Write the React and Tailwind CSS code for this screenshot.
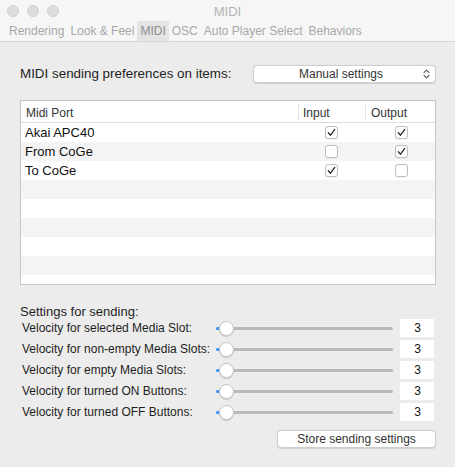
import { useState } from "react";

const tabs = ["Rendering", "Look & Feel", "MIDI", "OSC", "Auto Player Select", "Behaviors"];

const ports = [
  { name: "Akai APC40", input: true, output: true },
  { name: "From CoGe", input: false, output: true },
  { name: "To CoGe", input: true, output: false },
];

const velocities = [
  "Velocity for selected Media Slot:",
  "Velocity for non-empty Media Slots:",
  "Velocity for empty Media Slots:",
  "Velocity for turned ON Buttons:",
  "Velocity for turned OFF Buttons:",
];

function Check({ checked }) {
  return (
    <div className="w-[13px] h-[13px] rounded-[3px] border border-[#bdbdbd] bg-white flex items-center justify-center shadow-[0_0.5px_0.5px_rgba(0,0,0,0.08)]">
      {checked && (
        <svg width="9" height="9" viewBox="0 0 9 9">
          <path d="M1.3 4.8 L3.5 7.2 L7.8 1.4" fill="none" stroke="#2a2a2a" strokeWidth="1.3" strokeLinecap="round" strokeLinejoin="round" />
        </svg>
      )}
    </div>
  );
}

function Slider() {
  return (
    <div className="relative w-[177px] h-[18px] flex items-center">
      <div className="absolute left-0 right-0 h-[3px] rounded-full bg-[#b9b9b9]" />
      <div className="absolute left-0 w-[10px] h-[3px] rounded-l-full bg-[#3b99fc]" />
      <div className="absolute left-[3px] w-[15px] h-[15px] rounded-full bg-white border border-[#c4c4c4] shadow-[0_1px_1px_rgba(0,0,0,0.15)]" />
    </div>
  );
}

export default function App() {
  const [mode] = useState("Manual settings");
  const empty = [0, 1, 2, 3, 4, 5];

  return (
    <div className="w-[455px] h-[467px] bg-[#ececec] flex flex-col overflow-hidden" style={{ fontFamily: '"Liberation Sans", Arial, sans-serif' }}>
      {/* title bar + tabs */}
      <div className="bg-[#f6f6f6] border-b border-[#d6d6d6]">
        <div className="relative h-[21px] flex items-center justify-center">
          <div className="absolute left-[7px] top-[5px] flex gap-[8px]">
            <div className="w-[12px] h-[12px] rounded-full bg-[#dcdcdc] border border-[#d0d0d0]" />
            <div className="w-[12px] h-[12px] rounded-full bg-[#dcdcdc] border border-[#d0d0d0]" />
            <div className="w-[12px] h-[12px] rounded-full bg-[#dcdcdc] border border-[#d0d0d0]" />
          </div>
          <span className="text-[13px] text-[#b3b3b3] mt-[2px]">MIDI</span>
        </div>
        <div className="flex h-[20px] pl-[6px] items-stretch">
          {tabs.map((t) => (
            <div
              key={t}
              className={
                "px-[3px] flex items-center text-[12px] " +
                (t === "MIDI" ? "bg-[#e4e4e4] text-[#8e8e8e]" : "text-[#a8a8a8]")
              }
            >
              {t}
            </div>
          ))}
        </div>
      </div>

      <div className="pl-[20px] pr-[19px] flex flex-col">
        <div className="flex items-center justify-between mt-[23px] h-[18px]">
          <span className="text-[13.4px] text-[#1e1e1e]">MIDI sending preferences on items:</span>
          <div className="relative w-[183px] h-[18px] bg-white rounded-[4px] border border-[#cdcdcd] shadow-[0_0.5px_1px_rgba(0,0,0,0.12)] flex items-center justify-center">
            <span className="text-[12px] text-[#333] pr-[7px]">{mode}</span>
            <svg className="absolute right-[5px]" width="7" height="10" viewBox="0 0 7 10">
              <path d="M1 3.6 L3.5 1.2 L6 3.6 M1 6.4 L3.5 8.8 L6 6.4" fill="none" stroke="#555" strokeWidth="1.1" strokeLinecap="round" strokeLinejoin="round" />
            </svg>
          </div>
        </div>

        <div className="mt-[17px] h-[185px] border border-[#c6c6c6] bg-white overflow-hidden flex flex-col">
          <div className="h-[22px] shrink-0 flex items-center border-b border-[#dedede] text-[12px] text-[#333]">
            <div className="w-[277px] pl-[5px] pt-[3px]">Midi Port</div>
            <div className="w-px h-[16px] bg-[#e2e2e2]" />
            <div className="w-[66px] pl-[4px] pt-[3px]">Input</div>
            <div className="w-px h-[16px] bg-[#e2e2e2]" />
            <div className="pl-[5px] pt-[3px]">Output</div>
          </div>
          {ports.map((p, i) => (
            <div key={p.name} className={"h-[19px] shrink-0 flex items-center text-[13px] text-[#111] " + (i % 2 ? "bg-[#f4f4f4]" : "bg-white")}>
              <div className="w-[304px] pl-[4px]">{p.name}</div>
              <Check checked={p.input} />
              <div className="w-[57px]" />
              <Check checked={p.output} />
            </div>
          ))}
          {empty.map((e) => (
            <div key={e} className={"h-[19px] shrink-0 " + (e % 2 ? "bg-white" : "bg-[#f4f4f4]")} />
          ))}
        </div>

        <div className="mt-[19px] text-[13px] text-[#1e1e1e] leading-[15px]">Settings for sending:</div>

        <div className="flex flex-col gap-[3px]">
          {velocities.map((v) => (
            <div key={v} className="flex items-center h-[18px]">
              <div className="w-[196px] pl-[2px] text-[12px] text-[#1e1e1e]">{v}</div>
              <Slider />
              <div className="ml-[7px] w-[34px] h-[18px] bg-white flex items-center justify-end pr-[13px] text-[12px] text-[#111]">3</div>
            </div>
          ))}
        </div>

        <div className="flex justify-end mt-[9px]">
          <button className="w-[159px] h-[18px] bg-white rounded-[4px] border border-[#cdcdcd] shadow-[0_0.5px_1px_rgba(0,0,0,0.12)] text-[12px] text-[#333] flex items-center justify-center">
            Store sending settings
          </button>
        </div>
      </div>
    </div>
  );
}
